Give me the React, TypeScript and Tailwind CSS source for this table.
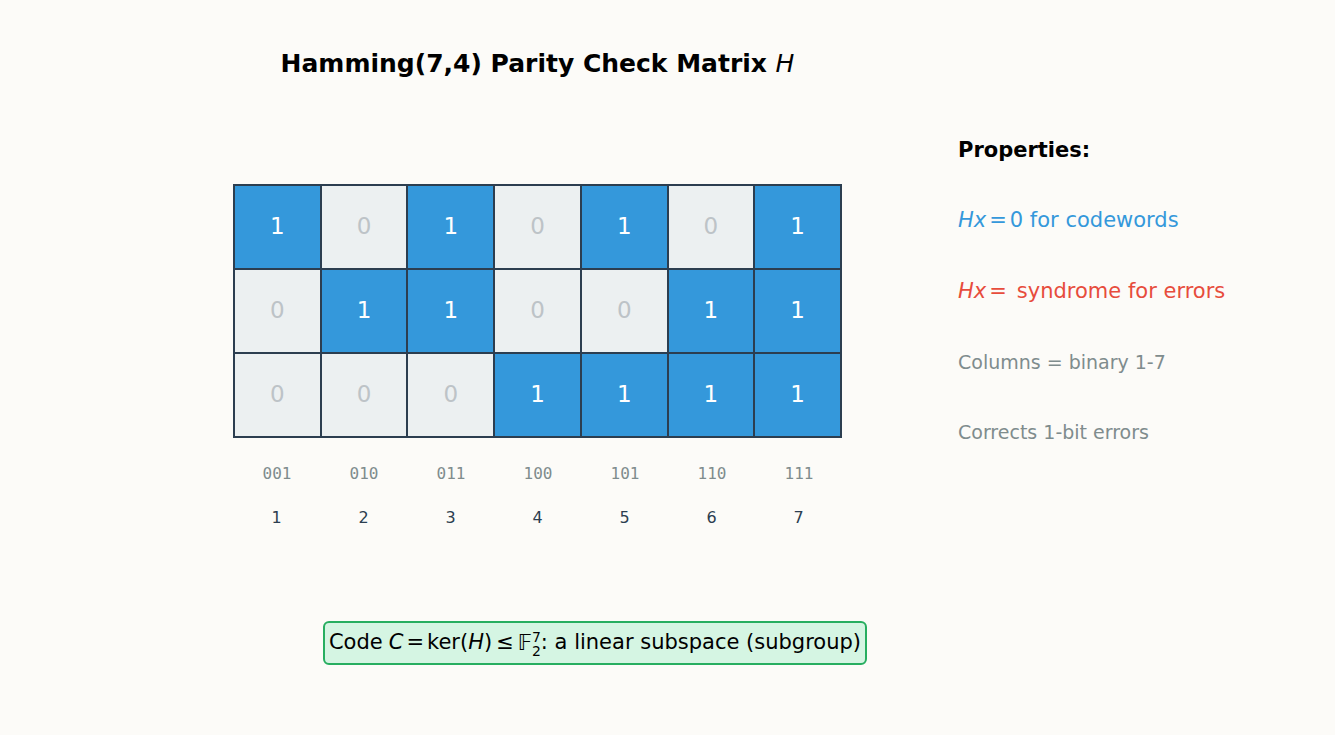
import React from "react";

const H = [
  [1, 0, 1, 0, 1, 0, 1],
  [0, 1, 1, 0, 0, 1, 1],
  [0, 0, 0, 1, 1, 1, 1],
];
const bin = ["001", "010", "011", "100", "101", "110", "111"];

export default function App() {
  return (
    <div
      className="w-[1335px] h-[735px] bg-[#fcfbf8] relative overflow-hidden"
      style={{ fontFamily: '"DejaVu Sans", sans-serif' }}
    >
      <div className="flex">
        {/* left column */}
        <div className="w-[609px] ml-[233px] flex flex-col">
          <div className="h-[184px] flex justify-center pt-[51px]">
            <h1 className="text-[25px] font-bold text-black leading-none whitespace-nowrap">
              Hamming(7,4) Parity Check Matrix <span className="italic font-normal">H</span>
            </h1>
          </div>
          <div className="grid grid-cols-7 border border-[#2c3e50] w-[609px] h-[254px]">
            {H.flat().map((v, i) => (
              <div
                key={i}
                className={`border border-[#2c3e50] flex items-center justify-center text-[23px] pb-[2px] ${
                  v ? "bg-[#3498db] text-white" : "bg-[#ecf0f1] text-[#bdc3c7]"
                }`}
              >
                {v}
              </div>
            ))}
          </div>
          <div className="grid grid-cols-7 mt-[26px]">
            {bin.map((b) => (
              <div
                key={b}
                className="text-center text-[16px] leading-[20px] text-[#7f8c8d] pl-[1px]"
                style={{ fontFamily: '"DejaVu Sans Mono", monospace' }}
              >
                {b}
              </div>
            ))}
          </div>
          <div className="grid grid-cols-7 mt-[23px]">
            {bin.map((b, i) => (
              <div key={b} className="text-center text-[16px] leading-[20px] text-[#2c3e50] pt-[1px]">
                {i + 1}
              </div>
            ))}
          </div>
        </div>
        {/* right column */}
        <div className="ml-[116px] pt-[138px] flex flex-col">
          <div className="text-[21px] font-bold text-black leading-[24px]">Properties:</div>
          <div className="mt-[46px] text-[21px] leading-[24px] text-[#3498db] whitespace-nowrap">
            <span className="italic">Hx</span>
            <span className="mx-[3px]">=</span>0 for codewords
          </div>
          <div className="mt-[47px] text-[21px] leading-[24px] text-[#e74c3c] whitespace-nowrap">
            <span className="italic">Hx</span>
            <span className="ml-[3px] mr-[10px]">=</span>syndrome for errors
          </div>
          <div className="mt-[48px] text-[19px] leading-[22px] text-[#7f8c8d] whitespace-nowrap">
            Columns = binary 1-7
          </div>
          <div className="mt-[48px] text-[19px] leading-[22px] text-[#7f8c8d] whitespace-nowrap">
            Corrects 1-bit errors
          </div>
        </div>
      </div>
      <div className="flex justify-start ml-[323px] mt-[93px]">
        <div className="h-[44px] w-[544px] border-2 border-[#27ae60] rounded-[6px] bg-[#d5f5e3] flex items-center justify-center text-[21px] text-black whitespace-nowrap">
          Code <span className="italic ml-[6px]">C</span>
          <span className="mx-[3px]">=</span>ker(<span className="italic">H</span>)
          <span className="mx-[4px]">≤</span>
          <span className="leading-[24px]">𝔽</span>
          <span className="inline-flex flex-col text-[14px] leading-[14px] pt-[2px]">
            <span>7</span>
            <span>2</span>
          </span>
          <span>: a linear subspace (subgroup)</span>
        </div>
      </div>
    </div>
  );
}
